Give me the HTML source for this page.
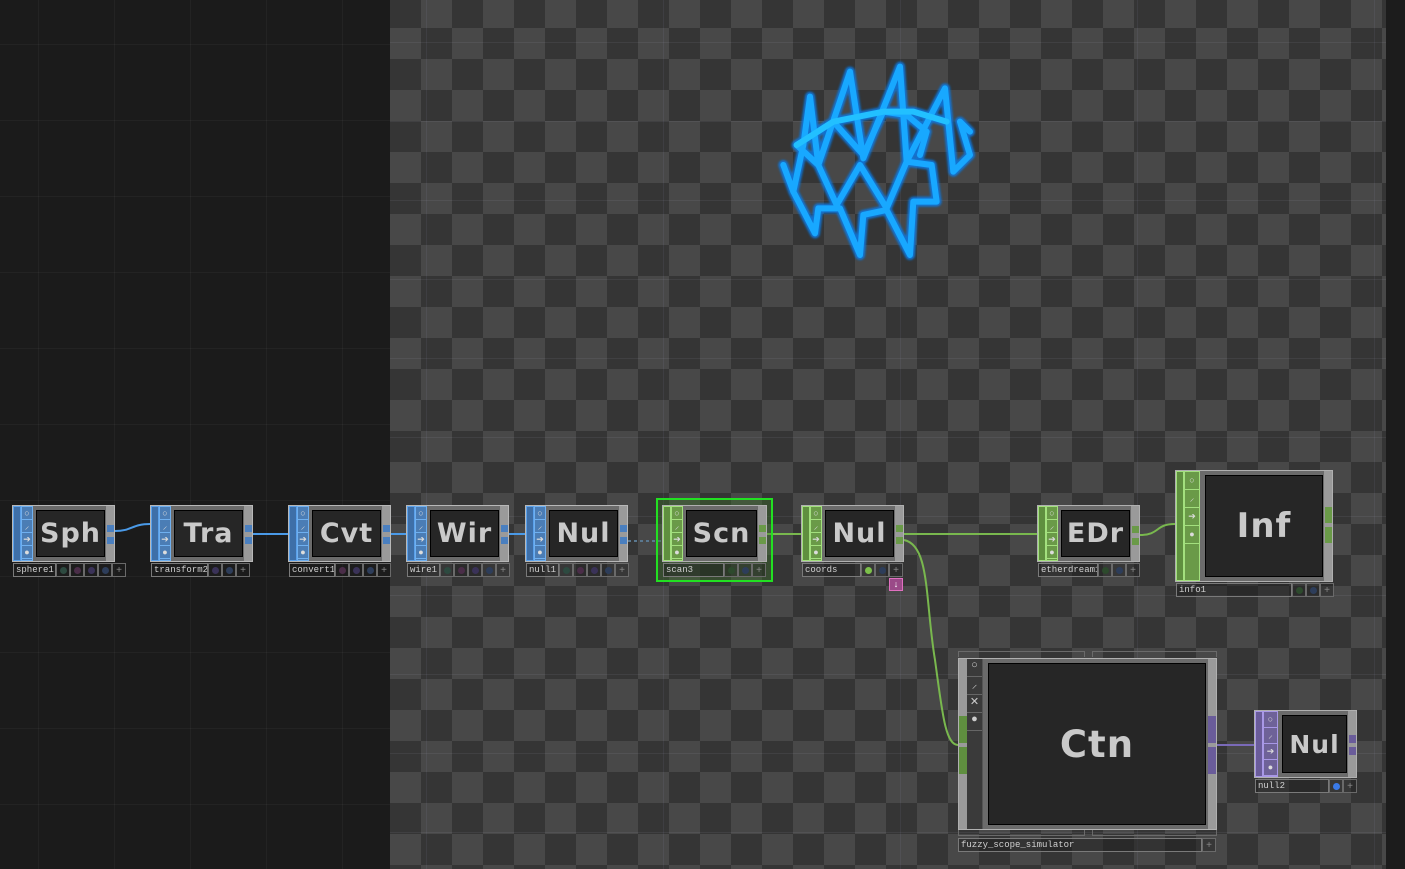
<!DOCTYPE html>
<html><head><meta charset="utf-8"><style>
*{margin:0;padding:0;box-sizing:border-box}
body{width:1405px;height:869px;overflow:hidden;background:#1b1b1b;position:relative;font-family:"Liberation Sans",sans-serif}
#left{position:absolute;left:0;top:0;width:390px;height:869px;background:#1b1b1b;
background-image:linear-gradient(90deg,rgba(255,255,255,.035) 1px,transparent 1px),linear-gradient(0deg,rgba(255,255,255,.035) 1px,transparent 1px);
background-size:76px 76px;background-position:38px 45px}
#chk{position:absolute;left:390px;top:0;width:996px;height:869px;
background:conic-gradient(#484848 0 25%,#353535 0 50%,#484848 0 75%,#353535 0);
background-size:62px 62px;background-position:0 -3px}
#chk:after{content:"";position:absolute;inset:0;background-image:linear-gradient(90deg,rgba(150,150,200,.09) 1px,transparent 1px),linear-gradient(0deg,rgba(180,180,200,.09) 1px,transparent 1px);background-size:237px 79px;background-position:36px 43px}
#rt{position:absolute;left:1386px;top:0;width:19px;height:869px;background:#1c1c1c}
.n{position:absolute;background:#6b6b6b;border:1px solid #b0b0b0}
.lb{position:absolute;left:0;top:0;bottom:0;width:8px}
.ic{position:absolute;left:8px;top:0;bottom:0;width:12px}
.ic i{display:block;height:13px;font-style:normal;font-size:9px;line-height:12px;text-align:center;color:#dcdcdc}
.vw{position:absolute;left:23px;top:4px;right:9px;bottom:4px;background:#262626;border:1px solid #000;color:#c9c9c9;font:bold 27px "DejaVu Sans",sans-serif;display:flex;align-items:center;justify-content:center;letter-spacing:1px}
.rs{position:absolute;right:0;top:0;bottom:0;width:8px;background:#9a9a9a}
.o{position:absolute;right:0;width:7px;height:7px}
.lab{position:absolute;left:0;height:14px;display:flex}
.nm{border:1px solid #7a7a7a;height:14px;font:9px "Liberation Mono","DejaVu Sans Mono",monospace;color:#d0d0d0;padding-left:2px;line-height:12px;background:rgba(30,30,30,.5);overflow:hidden;white-space:nowrap}
.bx{width:14px;height:14px;border:1px solid #6a6a6a;display:flex;align-items:center;justify-content:center;color:#888;font-size:10px;background:rgba(30,30,30,.4)}
.bx b{width:7px;height:7px;border-radius:50%;display:block}
.B .lb{background:#3e6fa8;border:1px solid #5aa0ea}.B .ic{background:#4b7db5;border:1px solid #6fb0f0}.B .ic i{border-bottom:1px solid #6fb0f0}.B .o{background:#4a7fbf}.B{border-color:#b8b8b8}
.G .lb{background:#5f8f3f;border:1px solid #a3e07e}.G .ic{background:#6a9a48;border:1px solid #a3e07e}.G .ic i{border-bottom:1px solid #a3e07e}.G .o{background:#6a9a48}
.P .lb{background:#6a5c9a;border:1px solid #a898e6}.P .ic{background:#6e6298;border:1px solid #a898e6}.P .ic i{border-bottom:1px solid #a898e6}.P .o{background:#6a5c9a}
</style></head><body>
<div id="left"></div><div id="chk"></div><div id="rt"></div>

<svg width="1405" height="869" style="position:absolute;left:0;top:0">
<defs><filter id="bl" x="-20%" y="-20%" width="140%" height="140%"><feGaussianBlur stdDeviation="3"/></filter></defs>
<g transform="translate(760,55) scale(0.3333)" fill="none" stroke-linejoin="round" stroke-linecap="round">
<g stroke="#0a78e0" stroke-width="30" filter="url(#bl)" opacity="0.9">
<polyline points="70,330 100,410 165,535 175,460 240,460 300,600 310,480 380,465 450,600 460,440 530,440 515,330 440,320 380,460 300,330 230,450 175,330 110,270 220,200 310,300 370,170 440,180 500,230 480,300"/>
<polyline points="100,410 130,270 150,125 175,330 270,50 310,310 420,35 440,320 555,100 580,350 630,300 600,200 630,230"/>
<polyline points="110,270 220,200 370,170 460,170 560,200"/>
</g>
<g stroke="#18a8ff" stroke-width="18">
<polyline points="70,330 100,410 165,535 175,460 240,460 300,600 310,480 380,465 450,600 460,440 530,440 515,330 440,320 380,460 300,330 230,450 175,330 110,270 220,200 310,300 370,170 440,180 500,230 480,300"/>
<polyline points="100,410 130,270 150,125 175,330 270,50 310,310 420,35 440,320 555,100 580,350 630,300 600,200 630,230"/>
<polyline points="110,270 220,200 370,170 460,170 560,200" stroke="#22c0ff"/>
</g>
</g>
<g fill="none" stroke-width="2">
<path d="M115 531 C132 531,132 524,150 524" stroke="#4a9ae8"/>
<path d="M253 534 L288 534" stroke="#4a9ae8"/>
<path d="M391 534 L406 534" stroke="#4a9ae8"/>
<path d="M509 534 L525 534" stroke="#4a9ae8"/>
<path d="M628 541 L662 541" stroke="#5a7890" stroke-dasharray="3 3"/>
<path d="M767 534 L801 534" stroke="#79b84e"/>
<path d="M904 534 L1037 534" stroke="#79b84e"/>
<path d="M1140 535 C1160 535,1155 524,1175 524" stroke="#79b84e"/>
<path d="M904 540 C930 545,925 600,935 660 C942 710,945 745,958 745" stroke="#79b84e"/>
<path d="M1217 745 L1254 745" stroke="#7a6ab8"/>
</g>
</svg>

<div class="n B" style="left:12px;top:505px;width:103px;height:57px"><div class="lb"></div><div class="ic"><i>○</i><i>⸝</i><i>➔</i><i>●</i></div><div class="vw">Sph</div><div class="rs"><div class="o" style="top:19px"></div><div class="o" style="top:31px"></div></div>
<div class="lab" style="top:57px"><div class="nm" style="width:43px">sphere1</div><div class="bx"><b style="background:#2d4a40"></b></div><div class="bx"><b style="background:#4a2d48"></b></div><div class="bx"><b style="background:#3a3258"></b></div><div class="bx"><b style="background:#2d3d5a"></b></div><div class="bx">+</div></div></div>
<div class="n B" style="left:150px;top:505px;width:103px;height:57px"><div class="lb"></div><div class="ic"><i>○</i><i>⸝</i><i>➔</i><i>●</i></div><div class="vw">Tra</div><div class="rs"><div class="o" style="top:19px"></div><div class="o" style="top:31px"></div></div>
<div class="lab" style="top:57px"><div class="nm" style="width:57px">transform2</div><div class="bx"><b style="background:#3a3258"></b></div><div class="bx"><b style="background:#2d3d5a"></b></div><div class="bx">+</div></div></div>
<div class="n B" style="left:288px;top:505px;width:103px;height:57px"><div class="lb"></div><div class="ic"><i>○</i><i>⸝</i><i>➔</i><i>●</i></div><div class="vw">Cvt</div><div class="rs"><div class="o" style="top:19px"></div><div class="o" style="top:31px"></div></div>
<div class="lab" style="top:57px"><div class="nm" style="width:46px">convert1</div><div class="bx"><b style="background:#4a2d48"></b></div><div class="bx"><b style="background:#3a3258"></b></div><div class="bx"><b style="background:#2d3d5a"></b></div><div class="bx">+</div></div></div>
<div class="n B" style="left:406px;top:505px;width:103px;height:57px"><div class="lb"></div><div class="ic"><i>○</i><i>⸝</i><i>➔</i><i>●</i></div><div class="vw">Wir</div><div class="rs"><div class="o" style="top:19px"></div><div class="o" style="top:31px"></div></div>
<div class="lab" style="top:57px"><div class="nm" style="width:33px">wire1</div><div class="bx"><b style="background:#2d4a40"></b></div><div class="bx"><b style="background:#4a2d48"></b></div><div class="bx"><b style="background:#3a3258"></b></div><div class="bx"><b style="background:#2d3d5a"></b></div><div class="bx">+</div></div></div>
<div class="n B" style="left:525px;top:505px;width:103px;height:57px"><div class="lb"></div><div class="ic"><i>○</i><i>⸝</i><i>➔</i><i>●</i></div><div class="vw">Nul</div><div class="rs"><div class="o" style="top:19px"></div><div class="o" style="top:31px"></div></div>
<div class="lab" style="top:57px"><div class="nm" style="width:33px">null1</div><div class="bx"><b style="background:#2d4a40"></b></div><div class="bx"><b style="background:#4a2d48"></b></div><div class="bx"><b style="background:#3a3258"></b></div><div class="bx"><b style="background:#2d3d5a"></b></div><div class="bx">+</div></div></div>

<div style="position:absolute;left:656px;top:498px;width:117px;height:84px;border:2px solid #22e022;background:rgba(60,120,40,.35)"></div>
<div class="n G" style="left:662px;top:505px;width:105px;height:57px"><div class="lb"></div><div class="ic"><i>○</i><i>⸝</i><i>➔</i><i>●</i></div><div class="vw">Scn</div><div class="rs"><div class="o" style="top:19px"></div><div class="o" style="top:31px"></div></div>
<div class="lab" style="top:57px"><div class="nm" style="width:61px">scan3</div><div class="bx"><b style="background:#2d4a2d"></b></div><div class="bx"><b style="background:#2d3d5a"></b></div><div class="bx">+</div></div></div>
<div class="n G" style="left:801px;top:505px;width:103px;height:57px"><div class="lb"></div><div class="ic"><i>○</i><i>⸝</i><i>➔</i><i>●</i></div><div class="vw">Nul</div><div class="rs"><div class="o" style="top:19px"></div><div class="o" style="top:31px"></div></div>
<div class="lab" style="top:57px"><div class="nm" style="width:59px">coords</div><div class="bx"><b style="background:#7cc04a"></b></div><div class="bx"><b style="background:#2d3d5a"></b></div><div class="bx">+</div></div></div>
<div style="position:absolute;left:889px;top:578px;width:14px;height:13px;border:1px solid #e070c0;background:#9a4a88;color:#fff;font-size:9px;text-align:center;line-height:11px">↓</div>
<div class="n G" style="left:1037px;top:505px;width:103px;height:57px"><div class="lb"></div><div class="ic"><i>○</i><i>⸝</i><i>➔</i><i>●</i></div><div class="vw">EDr</div><div class="rs"><div class="o" style="top:20px"></div><div class="o" style="top:32px"></div></div>
<div class="lab" style="top:57px"><div class="nm" style="width:60px">etherdream1</div><div class="bx"><b style="background:#2d4a2d"></b></div><div class="bx"><b style="background:#2d3d5a"></b></div><div class="bx">+</div></div></div>

<div class="n G" style="left:1175px;top:470px;width:158px;height:112px"><div class="lb"></div><div class="ic" style="width:16px"><i style="height:18px;line-height:17px">○</i><i style="height:18px;line-height:17px">⸝</i><i style="height:18px;line-height:17px">➔</i><i style="height:18px;line-height:17px">●</i></div><div class="vw" style="left:29px;top:4px;right:9px;bottom:4px;font-size:34px">Inf</div><div class="rs"><div class="o" style="top:36px;height:16px"></div><div class="o" style="top:56px;height:16px"></div></div>
<div class="lab" style="top:112px"><div class="nm" style="width:116px">info1</div><div class="bx"><b style="background:#2d4a2d"></b></div><div class="bx"><b style="background:#2d3d5a"></b></div><div class="bx">+</div></div></div>

<div style="position:absolute;left:958px;top:651px;width:127px;height:6px;border:1px solid #6a6a6a;border-bottom:none"></div>
<div style="position:absolute;left:1092px;top:651px;width:125px;height:6px;border:1px solid #6a6a6a;border-bottom:none"></div>
<div style="position:absolute;left:958px;top:830px;width:127px;height:6px;border:1px solid #6a6a6a;border-top:none"></div>
<div style="position:absolute;left:1092px;top:830px;width:125px;height:6px;border:1px solid #6a6a6a;border-top:none"></div>
<div class="n" style="left:958px;top:658px;width:259px;height:172px;background:#6b6b6b">
<div style="position:absolute;left:0;top:0;bottom:0;width:8px;background:#9a9a9a"></div>
<div style="position:absolute;left:0;top:57px;width:8px;height:27px;background:#5f8f3f"></div>
<div style="position:absolute;left:0;top:88px;width:8px;height:27px;background:#5f8f3f"></div>
<div style="position:absolute;left:8px;top:0;bottom:0;width:16px;background:#3a3a3a;border-right:1px solid #555">
<div style="height:18px;border-bottom:1px solid #666;color:#ccc;font-size:11px;text-align:center">○</div><div style="height:18px;border-bottom:1px solid #666;color:#ccc;font-size:11px;text-align:center">⸝</div><div style="height:18px;border-bottom:1px solid #666;color:#ccc;font-size:11px;text-align:center">✕</div><div style="height:18px;border-bottom:1px solid #666;color:#ccc;font-size:11px;text-align:center">●</div></div>
<div class="vw" style="left:29px;top:4px;right:10px;bottom:4px;font-size:37px">Ctn</div>
<div style="position:absolute;right:0;top:0;bottom:0;width:8px;background:#9a9a9a"><div style="position:absolute;top:57px;width:8px;height:27px;background:#6a5c9a"></div><div style="position:absolute;top:88px;width:8px;height:27px;background:#6a5c9a"></div></div>
</div>
<div style="position:absolute;left:958px;top:838px;display:flex"><div class="nm" style="width:244px">fuzzy_scope_simulator</div><div class="bx">+</div></div>

<div class="n P" style="left:1254px;top:710px;width:103px;height:68px"><div class="lb"></div><div class="ic" style="width:15px"><i style="height:16px;line-height:15px">○</i><i style="height:16px;line-height:15px">⸝</i><i style="height:16px;line-height:15px">➔</i><i style="height:16px;line-height:15px">●</i></div><div class="vw" style="left:27px;top:4px;right:9px;bottom:4px;font-size:25px">Nul</div><div class="rs"><div class="o" style="top:24px;height:8px"></div><div class="o" style="top:36px;height:8px"></div></div>
<div class="lab" style="top:68px"><div class="nm" style="width:74px">null2</div><div class="bx"><b style="background:#3a7ae8"></b></div><div class="bx">+</div></div></div>
</body></html>
